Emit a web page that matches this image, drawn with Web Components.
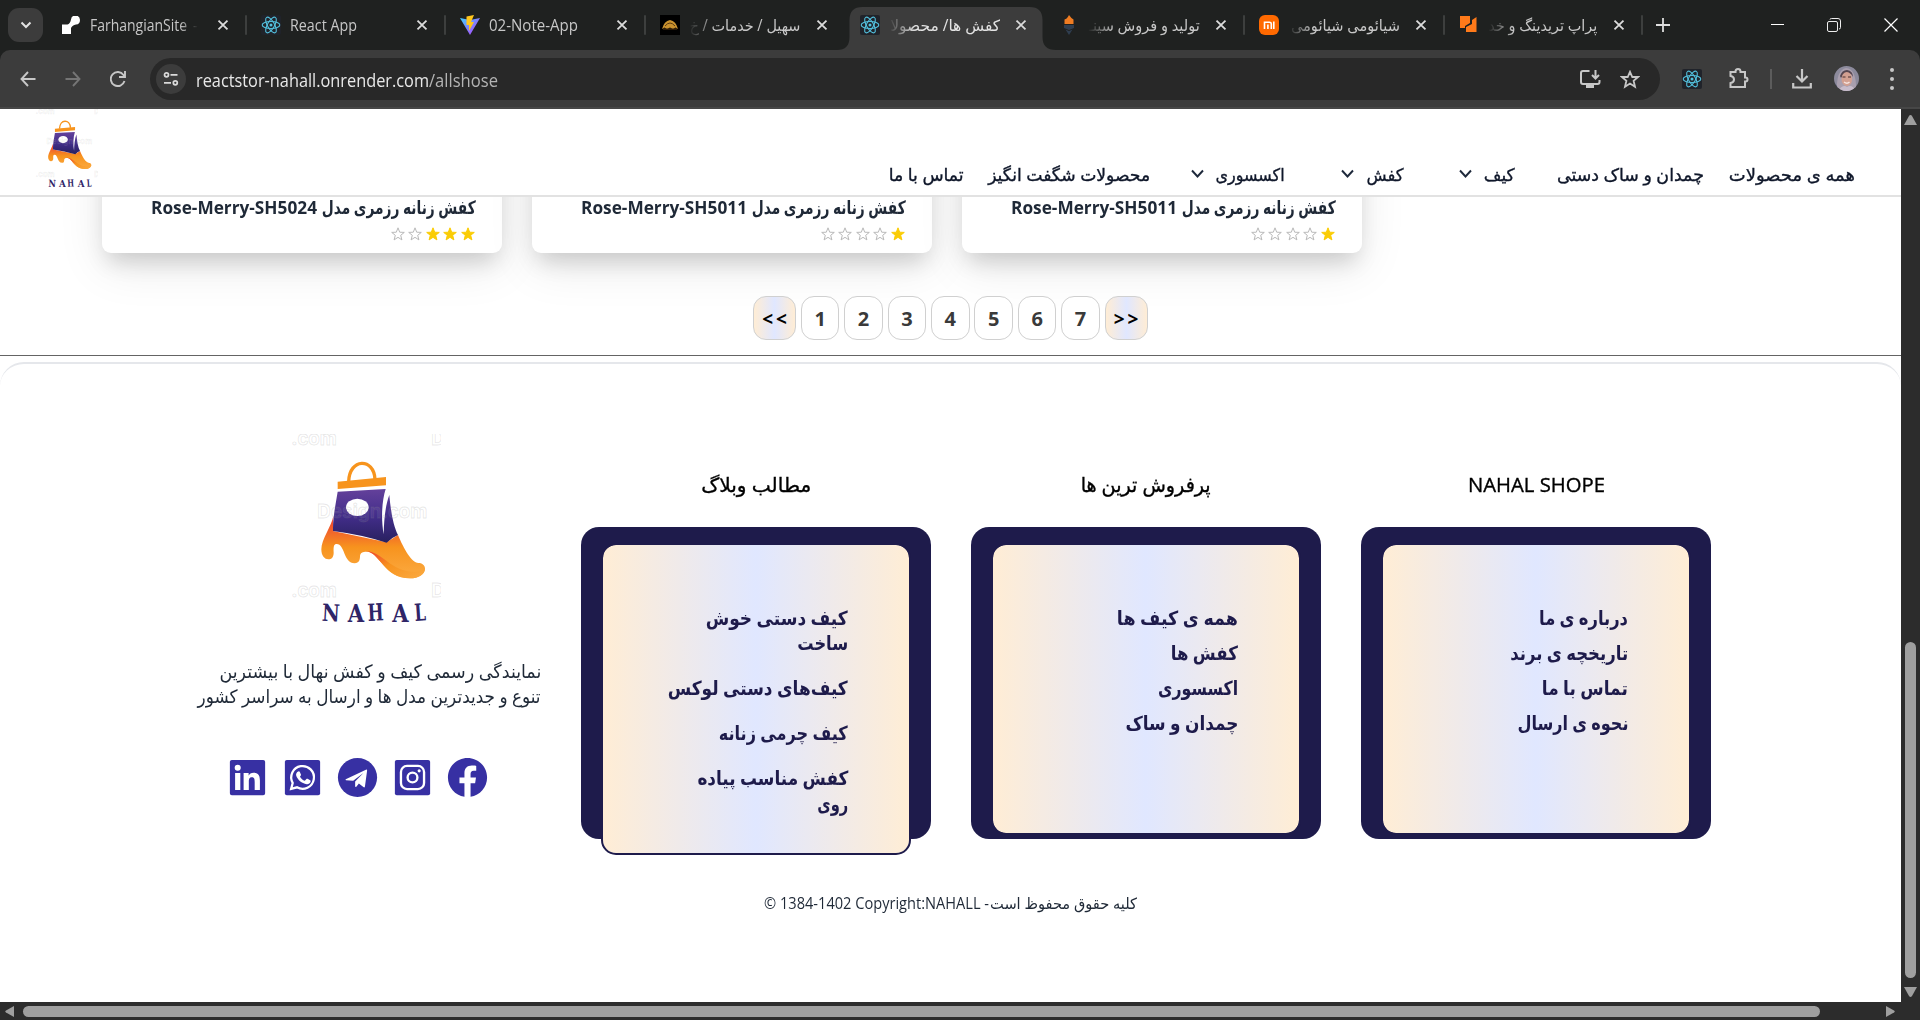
<!DOCTYPE html>
<html lang="fa">
<head>
<meta charset="utf-8">
<title>کفش ها/ محصولات</title>
<style>
html,body{margin:0;padding:0}
body{width:1920px;height:1020px;overflow:hidden;background:#1f2120;font-family:"Open Sans","Noto Sans","DejaVu Sans",sans-serif}
</style>
</head>
<body>
<browser-window></browser-window>
<script>
const define = (name, html, setup) => {
  const tpl = document.createElement('template');
  tpl.innerHTML = html;
  customElements.define(name, class extends HTMLElement {
    connectedCallback() {
      if (this.shadowRoot) return;
      this.attachShadow({ mode: 'open' }).appendChild(tpl.content.cloneNode(true));
      if (setup) setup(this, this.shadowRoot);
    }
  });
};

/* A run of text squeezed or stretched to a set width: w = width, s = font size, b = weight */
define('fit-text', `<style>
:host{display:inline-block;flex:none;white-space:nowrap;line-height:var(--lh,26px);height:var(--lh,26px);text-align:start}
:host([b="500"]){-webkit-text-stroke:.35px currentColor}
span{display:inline-block;transform-origin:0 50%}
:host([dir=rtl]) span{transform-origin:100% 50%}
</style><span><slot></slot></span>`, (el, root) => {
  const w = +el.getAttribute('w');
  el.style.width = w + 'px';
  el.style.fontSize = el.getAttribute('s') + 'px';
  if (el.getAttribute('b')) el.style.fontWeight = el.getAttribute('b');
  const span = root.querySelector('span');
  span.style.transform = `scaleX(${w / span.getBoundingClientRect().width})`;
});

define('react-mark', `<style>:host{display:block;width:20px;height:20px;flex:none}svg{display:block;width:100%;height:100%}
:host([boxed]){background:#20232a;border-radius:2px}</style>
<svg viewBox="0 0 20 20" fill="none" stroke="#53c1de" stroke-width="1.1"><circle cx="10" cy="10" r="1.5" fill="#53c1de" stroke="none"/>
<ellipse cx="10" cy="10" rx="8.8" ry="3.5"/><ellipse cx="10" cy="10" rx="8.8" ry="3.5" transform="rotate(60 10 10)"/><ellipse cx="10" cy="10" rx="8.8" ry="3.5" transform="rotate(120 10 10)"/></svg>`);

define('browser-tab', `<style>
:host{display:flex;flex:none;align-items:center;width:199.7px;height:50px;box-sizing:border-box;padding-left:14px;color:#c7c7c7}
.icon{display:flex;width:20px;height:20px;align-items:center;justify-content:center;margin-right:9px}
.title{display:flex;width:112px;overflow:hidden;align-items:center;white-space:nowrap}
:host([fade=l]) .title{-webkit-mask-image:linear-gradient(90deg,transparent 0,#000 26px);justify-content:flex-end}
:host([fade=r]) .title{width:108px;margin-right:4px;-webkit-mask-image:linear-gradient(270deg,transparent 0,#000 18px)}
.x{width:12px;height:12px;margin-left:15px}
.sep{width:2px;height:20px;background:#3d3f3e;margin-left:16px;border-radius:1px}
:host([nosep]) .sep{visibility:hidden}
:host([last]){width:197.700px}
:host([last]) .title{width:110px}
:host([active]) {position:relative;color:#e3e3e3}
.bg{display:none}
:host([active]) .bg{display:block;position:absolute;z-index:-1;left:-9px;top:7px;width:219px;height:43px}
</style>
<svg class="bg" viewBox="0 0 219 43"><path d="M0 43Q12.500 43 12.500 30V13Q12.500 0 25.500 0H192.500Q205.500 0 205.500 13V30Q205.500 43 219 43Z" fill="#3c3c3c"/></svg>
<div class="icon"><slot name="icon"></slot></div><div class="title"><slot></slot></div>
<svg class="x" viewBox="0 0 12 12" stroke="#dcdcdc" stroke-width="1.8"><path d="M1.500 1.500l9 9M10.500 1.500l-9 9"/></svg><div class="sep"></div>`);

define('tab-strip', `<style>
:host{display:flex;height:50px;background:#1f2120;align-items:center;isolation:isolate}
.menu{width:35px;height:34px;margin:0 4px 0 8px;background:#3c3c3c;border-radius:11px;display:flex;align-items:center;justify-content:center;flex:none}
.rest{display:flex;align-items:center;flex:1}
svg{display:block;flex:none}
.min{margin-left:101px}.max{margin-left:43px}.close{margin-left:43px}
</style>
<div class="menu"><svg width="12" height="8" viewBox="0 0 12 8" fill="none" stroke="#e3e3e3" stroke-width="2"><path d="M1.500 1.500L6 6l4.500-4.500"/></svg></div>
<browser-tab fade="r"><svg slot="icon" width="18" height="18" viewBox="0 0 18 18" fill="#fff"><path d="M0 18V8.500H5.500C7 8 8.500 6.500 9 3.500A4.500 4.500 0 1 1 14 8.500C11.500 9 10 10 9 12V18Z"/></svg><fit-text w="97" s="15.500">FarhangianSite</fit-text><fit-text w="5" s="15.500" style="margin-left:6px">-</fit-text></browser-tab>
<browser-tab><react-mark slot="icon" boxed></react-mark><fit-text w="67" s="15.500">React App</fit-text></browser-tab>
<browser-tab><svg slot="icon" width="20" height="20" viewBox="0 0 20 20"><defs><linearGradient id="v" x1="0" x2="1" y2="1"><stop stop-color="#41d1ff"/><stop offset="1" stop-color="#bd34fe"/></linearGradient></defs><path d="M0 3L10 5L20 3L10 20Z" fill="url(#v)"/><path d="M14 0L6.500 1.500V10H9V16L14 7H11Z" fill="#ffc61c"/></svg><fit-text w="89" s="15.500">02-Note-App</fit-text></browser-tab>
<browser-tab fade="l" nosep><svg slot="icon" width="20" height="20"><rect width="20" height="20" fill="#000"/><path d="M2 14Q4 6 10 5Q16 6 18 14L15.500 12.500L13 14L10 12.500L7 14L4.500 12.500Z" fill="#c9922e"/><path d="M5 11Q10 5 15 11M3 14H17" fill="none" stroke="#5c3a10"/></svg><fit-text w="111" s="15.500" dir="rtl">سهیل / خدمات / خ</fit-text></browser-tab>
<browser-tab fade="l" active nosep><react-mark slot="icon" boxed></react-mark><fit-text w="110" s="15.500" dir="rtl">کفش ها/ محصولا</fit-text></browser-tab>
<browser-tab fade="l"><svg slot="icon" width="20" height="20"><path d="M10 0Q12 3 14.500 4.500V9H5.500V4.500Q8 4 10 0Z" fill="#ef7c22"/><path d="M5 10H15V13L10 15L5 13ZM6.500 14.500L10 16L13.500 14.500L10 20Z" fill="#2f3e50"/></svg><fit-text w="111" s="15.500" dir="rtl">تولید و فروش سینـ</fit-text></browser-tab>
<browser-tab fade="l"><svg slot="icon" width="20" height="20"><rect width="20" height="20" rx="6" fill="#ff6900"/><path d="M5.500 14V7.200H10.500Q12.300 7.200 12.300 9V14M8.900 9.500V14M14.800 6.500V14" fill="none" stroke="#fff" stroke-width="1.600"/></svg><fit-text w="109" s="15.500" dir="rtl">شیائومی شیائومی</fit-text></browser-tab>
<browser-tab fade="l" last><svg slot="icon" width="20" height="20"><path d="M1 1H11V8L6 11V13H1ZM13 5L17.500 2V17H7V12L13 9Z" fill="#ff7a1a"/></svg><fit-text w="109" s="15.500" dir="rtl">پراپ تریدینگ و خد</fit-text></browser-tab>
<div class="rest">
<svg style="margin-left:13px" width="14" height="14" stroke="#dedede" stroke-width="1.800"><path d="M7 0V14M0 7H14"/></svg>
<svg class="min" width="13" height="14"><path d="M0 6.500H13" stroke="#fff"/></svg>
<svg class="max" width="14" height="14" fill="none" stroke="#eee"><rect x=".5" y="3.500" width="10" height="10" rx="1.500"/><path d="M3 1.500Q3 .5 4.500 .5H11Q13.500 .5 13.500 3V9.500Q13.500 11 12 11"/></svg>
<svg class="close" width="14" height="14" stroke="#fff" stroke-width="1.200"><path d="M.5 .5l13 13M13.500 .5l-13 13"/></svg>
</div>`);

define('tool-bar', `<style>
:host{display:block;height:59px;background:#1f2120}
.bar{height:59px;box-sizing:border-box;background:#3c3c3c;border-radius:10px 10px 0 0;border-bottom:2px solid #474747;display:flex;align-items:center}
svg{display:block;flex:none}
.omni{display:flex;align-items:center;width:1510px;height:42px;border-radius:21px;background:#282828;margin:1px 0 0 24px;box-sizing:border-box;padding-left:6px;color:#e8e8e8}
.info{width:30px;height:30px;border-radius:50%;background:#3c3c3c;display:flex;align-items:center;justify-content:center;margin-right:10px}
.path{color:#b4b4b4}
.avatar{margin-left:22px}
</style>
<div class="bar">
<svg style="margin-left:20px" width="16" height="16" fill="none" stroke="#c7c7c7" stroke-width="1.900"><path d="M15.500 8H1.500M8 1L1.500 8L8 15"/></svg>
<svg style="margin-left:29px" width="16" height="16" fill="none" stroke="#757575" stroke-width="1.900"><path d="M.5 8H14.500M8 1L14.500 8L8 15"/></svg>
<svg style="margin-left:29px" width="16" height="16" fill="none" stroke="#c7c7c7" stroke-width="1.900"><path d="M14.500 10A7 7 0 1 1 13.500 4L14.500 5.500M15 0V6H9"/></svg>
<div class="omni"><div class="info"><svg width="16" height="16" fill="none" stroke="#dadada" stroke-width="1.700"><circle cx="3.500" cy="3.800" r="2"/><path d="M7.500 3.800H14.500M1 11.800H8"/><circle cx="12.300" cy="11.800" r="2"/></svg></div>
<fit-text w="233" s="17.500" style="margin-top:2px">reactstor-nahall.onrender.com</fit-text><fit-text class="path" w="69" s="17.500" style="margin-top:2px">/allshose</fit-text>
<svg style="margin-left:1082px" width="21" height="18" fill="none" stroke="#c7c7c7" stroke-width="2"><path d="M9.500 1H3Q1 1 1 3V12Q1 14 3 14H17.500Q19.500 14 19.500 12V10M15.500 0V8M12 5L15.500 8.500L19 5"/><path d="M6 16.500H14" stroke-width="3"/></svg>
<svg style="margin-left:19px" width="20" height="19" fill="none" stroke="#c7c7c7" stroke-width="1.800"><path d="M10 1.800L12.300 7H18L13.600 10.800L15 16.700L10 13.500L5 16.700L6.400 10.800L2 7H7.700Z"/></svg></div>
<react-mark boxed style="margin-left:22px"></react-mark>
<svg style="margin:-1px 0 0 27px" width="20" height="21" fill="none" stroke="#c7c7c7" stroke-width="2"><path d="M1.500 4H6.500V3.500A2.300 2.300 0 0 1 11.500 3.500V4H16V9.500H16.500A2 2 0 0 1 16.500 13.500H16V19H1.500V15Q5 14.500 5 11.500Q5 8.500 1.500 8Z"/></svg>
<svg style="margin-left:21px" width="2" height="20"><rect width="2" height="20" fill="#5c5c5c"/></svg>
<svg style="margin-left:20px" width="20" height="20" fill="none" stroke="#c7c7c7" stroke-width="2.200"><path d="M10 0V12M4.500 7L10 12.500L15.500 7M1.200 14V18.500H18.800V14"/></svg>
<svg class="avatar" width="25" height="25" viewBox="0 0 25 25"><defs><clipPath id="c"><circle cx="12.500" cy="12.500" r="12.500"/></clipPath></defs><g clip-path="url(#c)"><rect width="25" height="25" fill="#8c8a9c"/><path d="M3 25Q2 4 12 2Q23 3 22 25Z" fill="#a99fae"/><path d="M6 10Q8 4 13 4Q19 5 19 11L17 8Q11 6 7 12Z" fill="#564650"/><ellipse cx="12.800" cy="13" rx="5.300" ry="7" fill="#d3a091"/><path d="M8.500 11H11.500M14 11H17" stroke="#4a3030" stroke-width="1.200"/><path d="M10 16Q13 18.500 15.500 16" stroke="#f6e4e0" stroke-width="1.400" fill="none"/><path d="M4 25Q9 18 13 21Q18 18 22 25Z" fill="#c8bccb"/><path d="M0 16L6 25H0Z" fill="#3c4671"/></g></svg>
<svg style="margin-left:31px" width="4" height="22" fill="#c7c7c7"><circle cx="2" cy="2" r="2"/><circle cx="2" cy="11" r="2"/><circle cx="2" cy="20" r="2"/></svg>
</div>`);

define('nahal-logo', `<style>:host{display:block;width:151px;height:197px;flex:none}svg{display:block;width:100%;height:100%}</style>
<svg viewBox="330 69 453 591"><defs>
<linearGradient id="p" x1="0" y1="0" x2="0" y2="1"><stop stop-color="#64419b"/><stop offset=".5" stop-color="#432e8b"/><stop offset="1" stop-color="#28205f"/></linearGradient>
<linearGradient id="o" x1="0" y1="0" x2="0" y2="1"><stop stop-color="#ee3b31"/><stop offset=".28" stop-color="#f26a29"/><stop offset=".5" stop-color="#f7931e"/><stop offset="1" stop-color="#fbab42"/></linearGradient>
<linearGradient id="r" x1="0" y1="0" x2="1" y2="1"><stop stop-color="#ee3b31"/><stop offset=".45" stop-color="#f7931e"/><stop offset="1" stop-color="#fbab42"/></linearGradient></defs>
<path d="M506 212C508 140 582 140 585 205" fill="none" stroke="#f7941d" stroke-width="10"/>
<path d="M473 212L618 198V223L473 234Z" fill="#f7941d"/>
<path d="M460 315C455 345 424 385 424 415C424 435 434 445 445 445C455 445 461 438 461 425C460 405 462 399 470 399C495 399 490 457 524 457C538 457 540 445 540 436C540 425 548 422 560 422C600 422 610 502 690 502C715 502 735 490 735 473C735 462 725 456 715 456C695 455 672 415 654 372L620 394L459 360Z" fill="url(#o)"/>
<path d="M556 421C602 416 634 485 705 482Q730 480 735 470C736 490 715 502 690 502C610 502 600 422 556 421Z" fill="url(#r)"/>
<path d="M473 242L617 234C605 272 603 325 611 370C612 322 617 280 628 252C632 300 640 345 654 372Q635 380 620 395Q540 370 459 360C458 320 467 280 473 242Z" fill="url(#p)"/>
<ellipse cx="532" cy="289" rx="34" ry="26" fill="#fff"/>
<g font-family="Inter,sans-serif" font-weight="700" font-size="56" fill="#fff" fill-opacity=".08" stroke="#888" stroke-opacity=".2" stroke-width="2.500"><text x="334" y="103" textLength="136">.com</text><text x="754" y="103">D</text><text x="412" y="322" textLength="330">Design.com</text><text x="334" y="559" textLength="136">.com</text><text x="754" y="559">D</text></g>
<g font-family="'DejaVu Serif'" font-weight="700" font-size="71" fill="#2f2567"><text x="426" y="631" textLength="54" lengthAdjust="spacingAndGlyphs" transform="rotate(3 452 604)">N</text><text x="503" y="632" textLength="49" lengthAdjust="spacingAndGlyphs">A</text><text x="563" y="629" textLength="48" lengthAdjust="spacingAndGlyphs" transform="rotate(-3 587 604)">H</text><text x="637" y="632" textLength="49" lengthAdjust="spacingAndGlyphs">A</text><text x="703" y="629" textLength="34" lengthAdjust="spacingAndGlyphs" transform="rotate(-4 720 604)">L</text></g></svg>`);

define('nav-arrow', `<style>:host{display:block;flex:none;width:13px;height:9px;margin-right:12px}svg{display:block}</style><svg width="13" height="9" fill="none" stroke="#1e293b" stroke-width="1.900"><path d="M1 1.500L6.500 7.500L12 1.500"/></svg>`);

define('site-header', `<style>
:host{display:flex;height:88px;box-sizing:border-box;border-bottom:2px solid #e2e2e2;background:#fff;justify-content:space-between;overflow:hidden;color:#0f172a}
nahal-logo{width:63px;height:82px;margin:0 0 0 35px}
nav{display:flex;direction:rtl;padding-right:46px;height:26px;margin-top:51px;align-items:center}
fit-text{margin-top:1px}
.n{margin-right:25px}.m{margin-right:42px}.k{margin-right:56px}.l{margin-right:40.500px}
</style>
<nahal-logo></nahal-logo>
<nav><fit-text dir="rtl" w="126" s="17.500" b="500">همه ی محصولات</fit-text>
<fit-text dir="rtl" class="n" w="147" s="17.500" b="500">چمدان و ساک دستی</fit-text>
<fit-text dir="rtl" class="m" w="31" s="17.500" b="500">کیف</fit-text><nav-arrow></nav-arrow>
<fit-text dir="rtl" class="k" w="37" s="17.500" b="500">کفش</fit-text><nav-arrow></nav-arrow>
<fit-text dir="rtl" class="k" w="69" s="17.500" b="500">اکسسوری</fit-text><nav-arrow></nav-arrow>
<fit-text dir="rtl" class="l" w="162" s="17.500" b="500">محصولات شگفت انگیز</fit-text>
<fit-text dir="rtl" class="n" w="75" s="17.500" b="500">تماس با ما</fit-text></nav>`);

define('product-card', `<style>
:host{display:flex;flex-direction:column;justify-content:flex-end;width:400px;height:300px;flex:none;box-sizing:border-box;background:#fff;border-radius:9px;padding:0 26px 10px;direction:rtl;color:#1f2937;--lh:20px;box-shadow:0 14px 22px -6px rgba(0,0,0,.16),0 14px 48px rgba(0,0,0,.09)}
.t{display:flex;gap:5px}
.s{display:flex;gap:3.600px;margin:8px 1px 0 0;height:18px;align-items:center}
svg{display:block}
</style><div class="t"><slot></slot></div><div class="s"></div>`, (el, root) => {
  const n = +el.getAttribute('stars');
  root.querySelector('.s').innerHTML = [0, 1, 2, 3, 4].map(i =>
    `<svg width="14" height="14" viewBox="0 0 14 14"><path d="M7 .8L8.700 5.200L13.300 5.400L9.700 8.300L10.900 12.900L7 10.300L3.100 12.900L4.300 8.300L.7 5.400L5.300 5.200Z" fill="${i < n ? '#facc05' : 'none'}" stroke="${i < n ? '#facc05' : '#b9b9b9'}"/></svg>`).join('');
});

define('page-button', `<style>
:host{display:flex;box-sizing:border-box;width:38.500px;height:44px;border:1px solid #d0d0d0;border-radius:13px;align-items:center;justify-content:center;font:700 20px "Open Sans",sans-serif;color:#3a3a3a;flex:none;background:#fff}
:host([end]){width:43px;color:#000;background:linear-gradient(90deg,#ffedd5,#e0e7ff,#ffedd5);font-size:19px}
:host([end]) span{letter-spacing:3px;margin:2px -3px 0 0}
</style><span><slot></slot></span>`);

define('product-area', `<style>
:host{display:block;height:158px;overflow:hidden}
.row{display:flex;gap:30px;margin:-244px 0 43px 102px}
.pages{display:flex;gap:4.900px;margin-left:753px}
</style>
<div class="row">
<product-card stars="3"><fit-text dir="rtl" w="154" s="18.500" b="700">کفش زنانه رزمری مدل</fit-text><fit-text dir="ltr" w="166" s="18" b="700">Rose-Merry-SH5024</fit-text></product-card>
<product-card stars="1"><fit-text dir="rtl" w="154" s="18.500" b="700">کفش زنانه رزمری مدل</fit-text><fit-text dir="ltr" w="166" s="18" b="700">Rose-Merry-SH5011</fit-text></product-card>
<product-card stars="1"><fit-text dir="rtl" w="154" s="18.500" b="700">کفش زنانه رزمری مدل</fit-text><fit-text dir="ltr" w="166" s="18" b="700">Rose-Merry-SH5011</fit-text></product-card>
</div>
<div class="pages"><page-button end>&lt;&lt;</page-button><page-button>1</page-button><page-button>2</page-button><page-button>3</page-button><page-button>4</page-button><page-button>5</page-button><page-button>6</page-button><page-button>7</page-button><page-button end>&gt;&gt;</page-button></div>`);

define('social-icons', `<style>:host{display:flex;gap:8px}svg{display:block;width:47px;height:47px;fill:#3730a3}.w{fill:none;stroke:#fff}.f{fill:#fff}</style>
<svg viewBox="0 0 24 24"><path d="M20 3H4a1 1 0 0 0-1 1v16a1 1 0 0 0 1 1h16a1 1 0 0 0 1-1V4a1 1 0 0 0-1-1zM8.339 18.337H5.667v-8.590h2.672v8.590zM7.003 8.574a1.548 1.548 0 1 1 0-3.096 1.548 1.548 0 0 1 0 3.096zm11.335 9.763h-2.669V14.160c0-.996-.018-2.277-1.388-2.277-1.390 0-1.601 1.086-1.601 2.207v4.248h-2.667v-8.590h2.560v1.174h.037c.355-.675 1.227-1.387 2.524-1.387 2.704 0 3.203 1.778 3.203 4.092v4.710z"/></svg>
<svg viewBox="0 0 24 24"><rect x="3" y="3" width="18" height="18" rx="1"/><path class="w" stroke-width="1.150" d="M6.200 17.800L7 14.800A5.800 5.800 0 1 1 9.200 17Z"/><path class="f" d="M9.900 8.900c.4-.1.600 0 .8.400l.5 1.200c.1.300 0 .5-.5 1.100.6 1 1.400 1.700 2.500 2.100l.8-.9c.2-.2.300-.2.600-.1l1.300.7c.3.200.3.300.2.800-.2.800-1.100 1.300-1.900 1.200-2.700-.4-4.700-2.300-5.400-4.300-.3-.9.200-2 1.100-2.200z"/></svg>
<svg viewBox="0 0 24 24"><circle cx="12" cy="12" r="10"/><path class="f" d="M6 12.900L16.300 8Q17 7.800 16.900 8.500L15.800 16.600Q15.600 17.300 15 16.900L12.700 15.100L11.400 16.700Q10.900 17.100 10.800 16.500V14.100L15 9.700L9.800 13.700L6.100 13.400Q5.700 13.100 6 12.900Z"/></svg>
<svg viewBox="0 0 24 24"><rect x="3" y="3" width="18" height="18" rx="1"/><rect class="w" x="6.100" y="6.100" width="11.800" height="11.800" rx="3.100" stroke-width="1.200"/><circle class="w" cx="12" cy="12" r="2.500" stroke-width="1.200"/><circle class="f" cx="15.400" cy="8.600" r=".8"/></svg>
<svg viewBox="0 0 24 24"><path d="M12.001 2.002c-5.522 0-9.999 4.477-9.999 9.999 0 4.990 3.656 9.126 8.437 9.879v-6.988h-2.540v-2.891h2.540V9.798c0-2.508 1.493-3.891 3.776-3.891 1.094 0 2.240.195 2.240.195v2.459h-1.264c-1.240 0-1.628.772-1.628 1.563v1.875h2.771l-.443 2.891h-2.328v6.988C18.344 21.129 22 16.992 22 12.001c0-5.522-4.477-9.999-9.999-9.999z"/></svg>`);

define('link-box', `<style>
:host{display:flex;flex-direction:column;align-items:center;width:350px;flex:none}
.h{height:26px;margin-bottom:29px;color:#000}
.outer{width:350px;height:312px;background:#1e1b4b;border-radius:18px;box-sizing:border-box;padding:16px 20px 0}
.inner{box-sizing:border-box;width:310px;height:292px;border:2px solid #1e1b4b;border-radius:15px;background:linear-gradient(90deg,#ffedd5,#e0e7ff,#ffedd5) padding-box;direction:rtl;padding:60px 61px 0;display:flex;flex-direction:column;align-items:flex-start;gap:9px;color:#1e1b4b}
:host([tall]) .inner{height:312px;gap:19px}
</style><div class="h"><slot name="h"></slot></div><div class="outer"><div class="inner"><slot></slot></div></div>`);

define('site-footer', `<style>
:host{display:block;flex:1;box-sizing:border-box;border-top:2px solid #e5e7eb;border-radius:24px 24px 0 0;margin-top:6px;color:#1f2937}
.cols{display:flex;align-items:flex-start;padding-left:197px}
.about{width:344px;margin:70px 40px 0 0;display:flex;flex-direction:column}
nahal-logo{margin-left:92.500px}
.desc{display:flex;flex-direction:column;direction:rtl;margin-top:27px;align-items:flex-start;--lh:25px}
social-icons{margin:46px 0 0 27px}
.boxes{display:flex;gap:40px;margin-top:108px}
.two{display:flex;flex-direction:column;align-items:flex-start}
.copy{display:flex;margin:51px 0 0 764px;gap:1px}
</style>
<div class="cols"><div class="about"><nahal-logo></nahal-logo>
<div class="desc"><fit-text dir="rtl" w="322" s="18.500">نمایندگی رسمی کیف و کفش نهال با بیشترین</fit-text><fit-text dir="rtl" w="343" s="18.500">تنوع و جدیدترین مدل ها و ارسال به سراسر کشور</fit-text></div>
<social-icons></social-icons></div>
<div class="boxes">
<link-box tall><fit-text slot="h" dir="rtl" w="110" s="20" b="500">مطالب وبلاگ</fit-text>
<div class="two"><fit-text dir="rtl" w="142" s="19.500" b="700">کیف دستی خوش</fit-text><fit-text dir="rtl" w="51" s="19.500" b="700" style="margin-top:-1px">ساخت</fit-text></div>
<fit-text dir="rtl" w="180" s="19.500" b="700">کیف‌های دستی لوکس</fit-text><fit-text dir="rtl" w="129" s="19.500" b="700">کیف چرمی زنانه</fit-text>
<div class="two"><fit-text dir="rtl" w="151" s="19.500" b="700">کفش مناسب پیاده</fit-text><fit-text dir="rtl" w="31" s="19.500" b="700">روی</fit-text></div></link-box>
<link-box><fit-text slot="h" dir="rtl" w="130" s="20" b="500">پرفروش ترین ها</fit-text>
<fit-text dir="rtl" w="121" s="19.500" b="700">همه ی کیف ها</fit-text><fit-text dir="rtl" w="67" s="19.500" b="700">کفش ها</fit-text><fit-text dir="rtl" w="80" s="19.500" b="700">اکسسوری</fit-text><fit-text dir="rtl" w="113" s="19.500" b="700">چمدان و ساک</fit-text></link-box>
<link-box><fit-text slot="h" w="137" s="20" b="500">NAHAL SHOPE</fit-text>
<fit-text dir="rtl" w="89" s="19.500" b="700">درباره ی ما</fit-text><fit-text dir="rtl" w="118" s="19.500" b="700">تاریخچه ی برند</fit-text><fit-text dir="rtl" w="86" s="19.500" b="700">تماس با ما</fit-text><fit-text dir="rtl" w="111" s="19.500" b="700">نحوه ی ارسال</fit-text></link-box>
</div></div>
<div class="copy"><fit-text w="225" s="15.500">© 1384-1402 Copyright:NAHALL -</fit-text><fit-text dir="rtl" w="147" s="15.500">کلیه حقوق محفوظ است</fit-text></div>`);

define('web-page', `<style>
:host{display:flex;flex-direction:column;width:1901px;height:893px;background:#fff;overflow:hidden}
hr{margin:0;border:0;height:1px;background:#646464;flex:none;width:100%}
site-header,product-area{flex:none}
</style><site-header></site-header><product-area></product-area><hr><site-footer></site-footer>`);

define('browser-window', `<style>
:host{display:flex;flex-direction:column;width:1920px;height:1020px}
.view{display:flex;height:893px}
.v{width:19px;background:#2c2c2c;display:flex;flex-direction:column;align-items:center;padding:6px 0 5px;box-sizing:border-box}
.vt{width:11px;height:336px;border-radius:6px;background:#9f9f9f;margin:517px 0 9px}
.h{display:flex;align-items:center;height:18px;background:#2c2c2c;padding-left:5px}
.ht{width:1797px;height:11px;border-radius:6px;background:#9f9f9f;margin:0 66px 0 9px}
svg{display:block;fill:#9f9f9f;flex:none}
</style><tab-strip></tab-strip><tool-bar></tool-bar>
<div class="view"><web-page></web-page><div class="v"><svg width="13" height="10"><path d="M6.500 0Q7.500 0 8 1L13 10H0L5 1Q5.500 0 6.500 0Z"/></svg><div class="vt"></div><svg width="13" height="10"><path d="M0 0H13L8 9Q6.500 11 5 9Z"/></svg></div></div>
<div class="h"><svg width="9" height="11"><path d="M9 0V11L1 6.500Q-.5 5.500 1 4.500Z"/></svg><div class="ht"></div><svg width="9" height="11"><path d="M0 0V11L8 6.500Q9.500 5.500 8 4.500Z"/></svg></div>`);
</script>
</body>
</html>
